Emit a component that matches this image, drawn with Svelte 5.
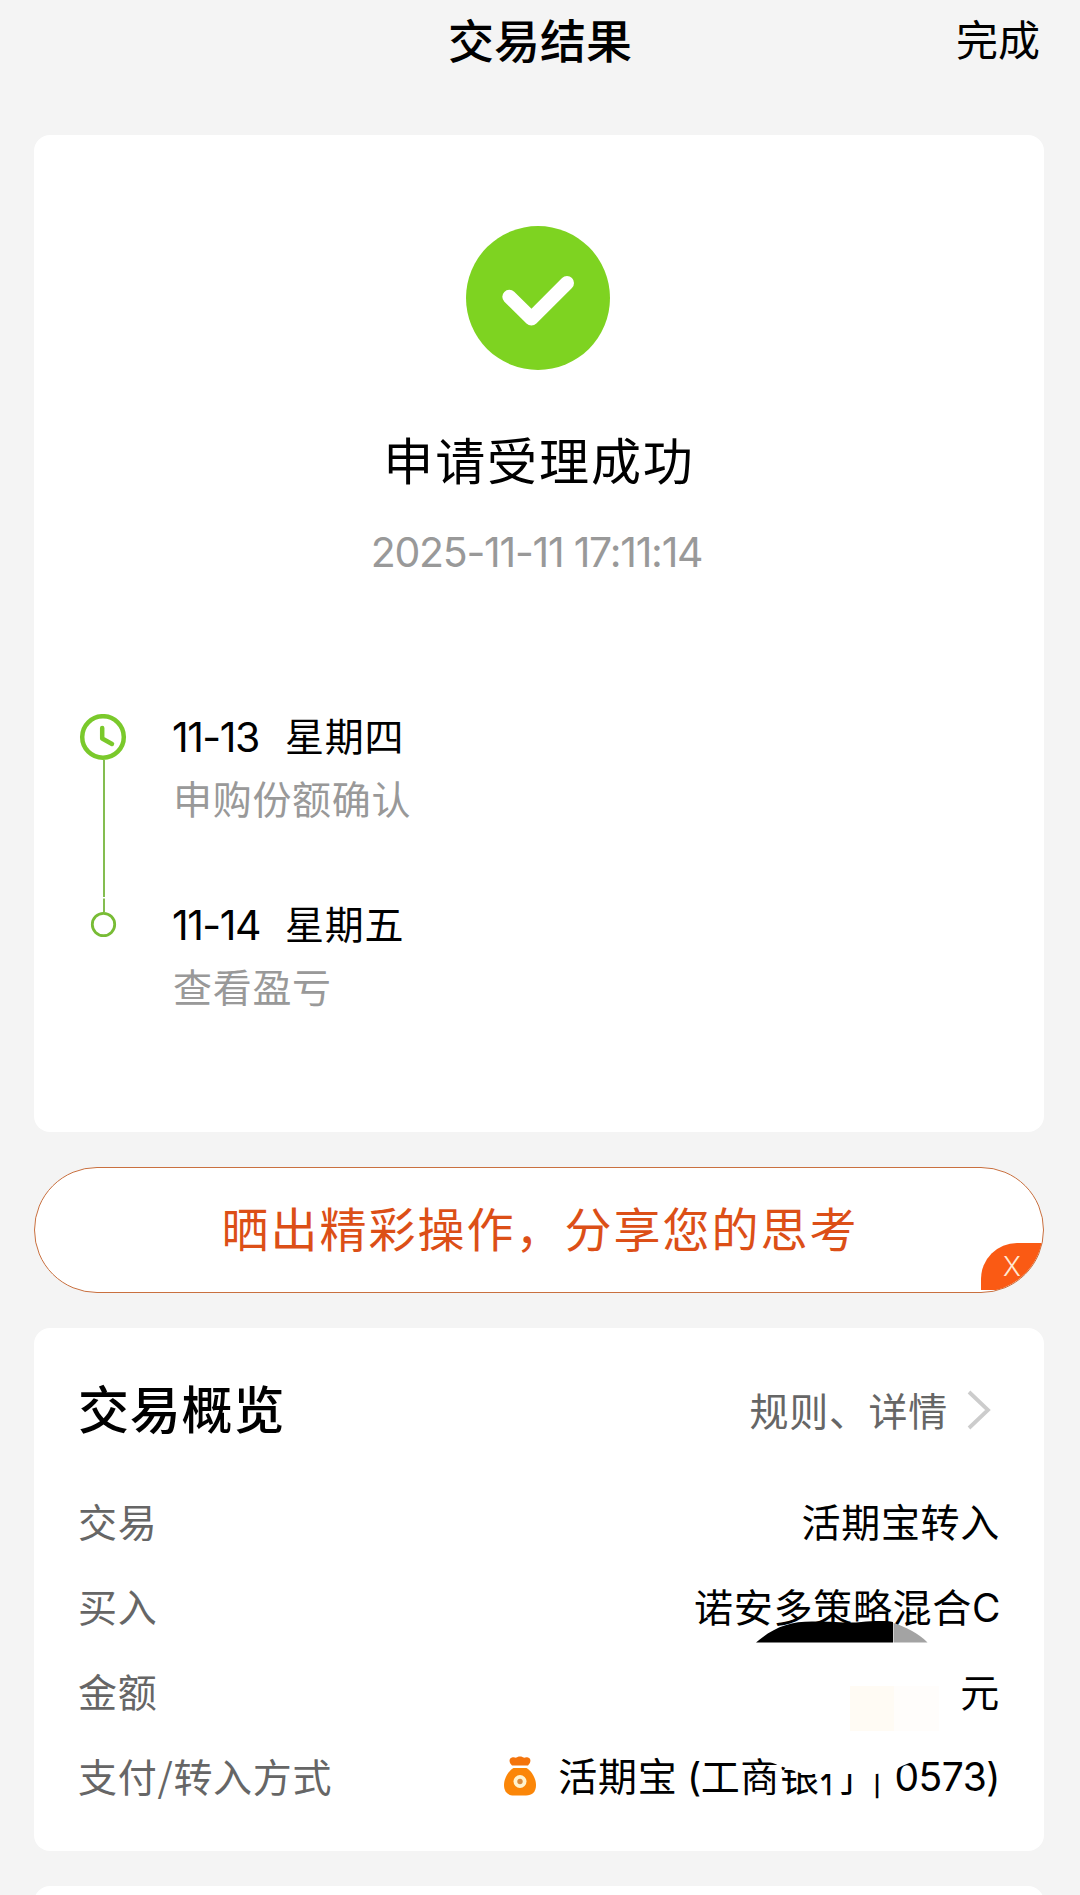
<script lang="ts">
  const steps = [
    { date: '11-13', day: '星期四', note: '申购份额确认' },
    { date: '11-14', day: '星期五', note: '查看盈亏' },
  ];
</script>

<div class="page">
  <header class="bar">
    <span></span>
    <h1>交易结果</h1>
    <button class="done">完成</button>
  </header>

  <section class="card result">
    <svg class="tick" width="144" height="144" viewBox="0 0 144 144">
      <circle cx="72" cy="72" r="72" fill="#7ed321" />
      <path d="M43.3 70.8 65.4 92.6 101 57" fill="none" stroke="#fff" stroke-width="14" stroke-linecap="round" stroke-linejoin="round" />
    </svg>
    <h2>申请受理成功</h2>
    <p class="time">2025-11-11 17:11:14</p>

    <div class="timeline">
      <svg class="rail" width="48" height="226" viewBox="0 0 48 226">
        <path d="M25 46V183M25 184.500V198" stroke="#84bd50" stroke-width="2" />
        <circle cx="24" cy="23" r="20.800" fill="#fff" stroke="#7ac92b" stroke-width="4.500" />
        <path d="M23.200 14V24.500L33 30" fill="none" stroke="#7ac92b" stroke-width="4.500" stroke-linecap="round" stroke-linejoin="round" />
        <circle cx="24.500" cy="210.500" r="11.200" fill="#fff" stroke="#78bc35" stroke-width="2.800" />
      </svg>
      <ol>
        {#each steps as s}
          <li>
            <div class="when"><span class="num">{s.date}</span><span class="day">{s.day}</span></div>
            <div class="note">{s.note}</div>
          </li>
        {/each}
      </ol>
    </div>
  </section>

  <section class="share">
    <span class="slogan">晒出精彩操作，分享您的思考</span>
    <i class="close">X</i>
  </section>

  <section class="card overview">
    <div class="head">
      <h3>交易概览</h3>
      <a class="more">规则、详情
        <svg width="26" height="40" viewBox="0 0 26 40"><path d="M2 2 21 20 2 38" fill="none" stroke="#ccc" stroke-width="3.800" /></svg>
      </a>
    </div>
    <dl>
      <div class="row"><dt>交易</dt><dd>活期宝转入</dd></div>
      <div class="row">
        <dt>买入</dt>
        <dd>诺安多策略混合<span class="lat">C</span>
          <svg class="blob" width="172" height="22" viewBox="0 0 172 22">
            <path d="M0 21.500C18 6 34 .5 56 .5C76 0 84 2 100 1.500C116 0 126-1 137 1V21.500Z" fill="#000" />
            <path d="M137.500 2C150 6 162 12 171.500 21.500H137.500Z" fill="#a3a3a3" />
          </svg>
        </dd>
      </div>
      <div class="row"><dt>金额</dt><dd>元<i class="tint"></i></dd></div>
      <div class="row">
        <dt>支付/转入方式</dt>
        <dd class="pay">
          <svg class="bag" width="32" height="40" viewBox="0 0 32 40">
            <path d="M8 9.500C5 6.500 4.500 2.500 8 1.500C10.500 1 11.500 2 12.500 1.500C14 0 18 0 19.500 1.500C20.500 2 21.500 1 24 1.500C27.500 2.500 27 6.500 24 9.500Z" fill="#f4740c" />
            <path d="M9.500 12H22.500C28 15 32 23 32 29C32 36 28 39.500 22 39.500H10C4 39.500 0 36 0 29C0 23 4 15 9.500 12Z" fill="#fb8608" />
            <circle cx="16" cy="25.500" r="6.500" fill="#fff3cf" />
            <circle cx="16" cy="25.500" r="2.700" fill="#d98a3c" />
          </svg>
          <span class="account">活期宝 <span class="lat">(</span>工商银行<span class="lat sep">|</span><span class="lat">0573)</span></span>
          <svg class="wipe" width="146" height="30" viewBox="0 0 146 30"><path d="M0 0H146V15Q138 17 132 20Q122 27 106 28H34Q26 26 0 16Z" fill="#fff" /></svg>
        </dd>
      </div>
    </dl>
  </section>

  <section class="card next"></section>
</div>

<style>
  :global(body) { background: #f4f4f4; }
  .page {
    height: 1895px; overflow: hidden; box-sizing: border-box; padding: 0 36px 0 34px;
    background: #f4f4f4; color: #000;
    font-family: 'Noto Sans CJK SC', sans-serif; font-size: 39px; letter-spacing: 0.7px;
    display: flex; flex-direction: column;
  }
  h1, h2, h3, p, ol, dl, dd, dt { margin: 0; padding: 0; font-weight: 400; }
  i { font-style: normal; }
  .card { background: #fff; border-radius: 16px; flex: none; }
  .bar {
    height: 76px; margin-bottom: 59px; flex: none;
    display: grid; grid-template-columns: 1fr auto 1fr; align-items: center;
  }
  h1 { font-size: 46px; font-weight: 500; letter-spacing: 0; line-height: 76px; margin-left: 2px; }
  .done {
    justify-self: end; border: 0; padding: 0; margin-right: 4px; background: none; color: #000;
    font: 42px/76px 'Noto Sans CJK SC', sans-serif;
  }
  .result { height: 997px; display: flex; flex-direction: column; align-items: center; }
  .tick { margin-top: 91px; margin-right: 2px; }
  h2 { margin-top: 52px; font-size: 50px; letter-spacing: 1.900px; line-height: 72px; }
  .time {
    margin-top: 30px; margin-right: 5px; color: #999; line-height: 56px;
    font-family: Inter, sans-serif; font-size: 41px; letter-spacing: -1.250px;
  }
  .timeline { align-self: stretch; margin-top: 134px; padding-left: 45px; display: flex; gap: 45px; }
  ol { list-style: none; margin-top: -9px; }
  li { height: 188px; }
  .when { display: flex; line-height: 58px; }
  .num { width: 113px; padding-top: 3px; margin-bottom: -3px; font-family: Inter, sans-serif; font-size: 41px; letter-spacing: -1.500px; }
  .note { margin-top: 4px; margin-left: 1px; line-height: 60px; color: #999; }
  .share {
    position: relative; flex: none; margin: 35px 0; height: 126px; box-sizing: border-box; overflow: hidden;
    border: 1.500px solid #c9703f; border-radius: 63px; background: #fff;
    color: #dc4f17; font-size: 47px; letter-spacing: 2px;
    display: flex; align-items: center; justify-content: center;
  }
  .slogan { padding: 0 0 7px 2px; }
  .close {
    position: absolute; right: 0; bottom: 2px; width: 62px; height: 47px; box-sizing: border-box;
    padding-left: 22px; border-top-left-radius: 36px; background: #fa5a14; color: #ffe9d2;
    font: 300 27px/48px Inter, sans-serif; letter-spacing: 0;
  }
  .overview { height: 523px; box-sizing: border-box; padding: 0 44px 0 44px; }
  .head { display: flex; justify-content: space-between; align-items: center; height: 150px; padding-top: 7px; box-sizing: border-box; }
  h3 { font-size: 51px; font-weight: 500; letter-spacing: 0.800px; }
  .more { display: flex; align-items: center; gap: 19px; color: #666; padding: 4px 7px 0 0; }
  .more svg { margin-top: 2px; }
  .row { display: flex; justify-content: space-between; height: 85px; line-height: 84px; }
  dt { color: #666; }
  dd { position: relative; white-space: nowrap; }
  .pay { display: flex; align-items: center; gap: 22px; height: 84px; }
  .bag { margin-top: 1px; }
  .account { padding-top: 1px; }
  .lat { font-family: Inter, sans-serif; letter-spacing: -0.5px; }
  .sep { display: inline-block; width: 35px; text-align: center; font-size: 32px; line-height: 1; }
  .blob { position: absolute; right: 72px; bottom: 5px; }
  .tint {
    position: absolute; right: 61px; top: 38px; width: 89px; height: 45px;
    background: linear-gradient(90deg, #fffbf4 50%, #fffdfb 50%);
  }
  .wipe { position: absolute; right: 84px; top: 13px; }
  .next { margin-top: 35px; height: 60px; }
</style>
